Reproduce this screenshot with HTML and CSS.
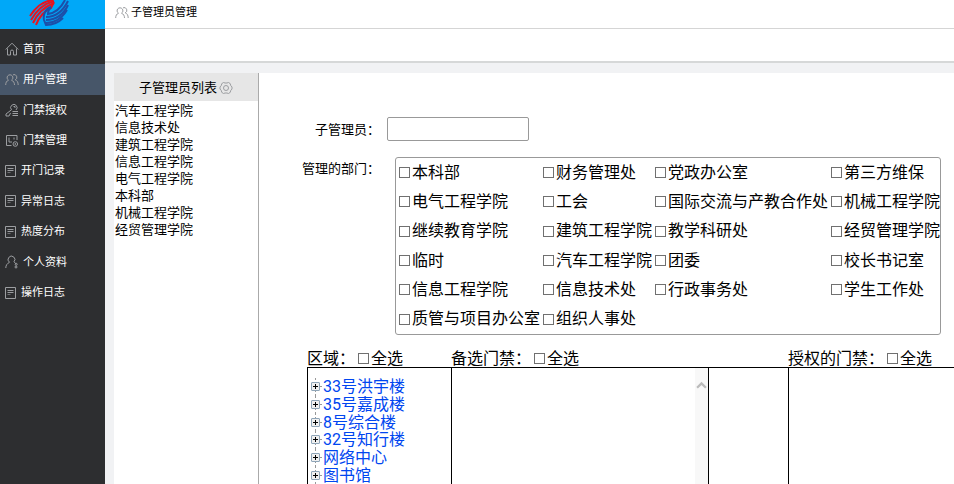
FILE: index.html
```html
<!DOCTYPE html>
<html lang="zh-CN">
<head>
    <meta charset="UTF-8">
    <meta name="viewport" content="width=device-width, initial-scale=1.0">
    <title>子管理员管理</title>
    <link rel="stylesheet" href="styles.css">
</head>
<body>
    <svg class="sprite" aria-hidden="true">
        <symbol id="icon-home" viewBox="0 0 14 14">
            <path d="M0.7 7.500 7 1.200l6.300 6.300M2.500 6.500v6.500h3V9.500a1.500 1.500 0 0 1 3 0V13h3V6.500"/>
        </symbol>
        <symbol id="icon-users" viewBox="0 0 14 14">
            <path d="M3.500 7.200a2.900 2.900 0 1 1 3 0C8.500 8 9.500 9.700 9.500 12M3.500 7.200C1.500 8 .7 9.700.7 12M8 1.800a2.600 2.600 0 0 1 2.200 5c2 .8 3 2.400 3 5.200"/>
        </symbol>
        <symbol id="icon-key" viewBox="0 0 14 14">
            <path d="M6.500 6.800a3.200 3.200 0 1 1 4.500.2M6.500 6.800 1 11v2h3l1.500-3M8.500 3.500h1.500v1.500M7.500 8.500H13M7.500 10.500H13M7.500 12.500H13"/>
        </symbol>
        <symbol id="icon-gate" viewBox="0 0 14 14">
            <path d="M6.500 11.500h-5v-10h10.500V6M4 3.500v4.500h3M9 3.500v2"/>
            <circle cx="10.300" cy="10" r="2.300"/>
            <circle cx="10.300" cy="10" r=".5"/>
        </symbol>
        <symbol id="icon-log" viewBox="0 0 12 14">
            <path d="M.5 1.500h10v11H.5zM2.500 4.500h6M2.500 6.500h6"/>
            <path d="M2.500 8.500h3" opacity=".6"/>
        </symbol>
        <symbol id="icon-person" viewBox="0 0 14 14">
            <path d="M4.500 7.300a3.400 3.400 0 1 1 4.500-.5M4.500 7.300C2 8.500.8 10.500.8 13M9 6.800l2 2"/>
            <circle cx="11.200" cy="9.300" r="1"/>
            <circle cx="11" cy="12" r="1"/>
        </symbol>
        <symbol id="icon-gear" viewBox="0 0 14 14">
            <path d="M4.500 1.500 6 2h2l1.500-.5 1.800 1.200.3 1.600L13 6v2l-1.400 1.700-.3 1.600-1.800 1.200L8 12H6l-1.500.5-1.800-1.200-.3-1.600L1 8V6l1.400-1.700.3-1.600z"/>
            <circle cx="7" cy="7" r="2.500"/>
        </symbol>
    </svg>

    <div class="app">
        <aside class="sidebar">
            <div class="logo">
                <svg viewBox="0 0 42 28" aria-hidden="true">
                    <g class="logo-red">
                        <path d="M2 16C7 8 15 1 25 0"/>
                        <path d="M3 20C8 11 15 4 26 1"/>
                        <path d="M5 23C9 14 16 7 26 3"/>
                        <path d="M8 25C11 17 17 10 23 8L26 2"/>
                    </g>
                    <g class="logo-blue">
                        <path d="M40 1C35 11 28 17 18 17"/>
                        <path d="M40 5C36 14 28 20 18 20"/>
                        <path d="M39 10C34 18 27 23 18 23"/>
                        <path d="M37 0C33 8 27 13 20 14C20 11 21 9 23 7C17 9 15 15 16 20L18 25C25 25 30 23 35 18"/>
                    </g>
                </svg>
            </div>
            <nav>
                <ul class="menu">
                    <li><a href="#"><svg class="icon"><use href="#icon-home"/></svg>首页</a></li>
                    <li><a href="#" class="active"><svg class="icon"><use href="#icon-users"/></svg>用户管理</a></li>
                    <li><a href="#"><svg class="icon"><use href="#icon-key"/></svg>门禁授权</a></li>
                    <li><a href="#"><svg class="icon"><use href="#icon-gate"/></svg>门禁管理</a></li>
                    <li><a href="#"><svg class="icon icon-narrow"><use href="#icon-log"/></svg>开门记录</a></li>
                    <li><a href="#"><svg class="icon icon-narrow"><use href="#icon-log"/></svg>异常日志</a></li>
                    <li><a href="#"><svg class="icon icon-narrow"><use href="#icon-log"/></svg>热度分布</a></li>
                    <li><a href="#"><svg class="icon"><use href="#icon-person"/></svg>个人资料</a></li>
                    <li><a href="#"><svg class="icon icon-narrow"><use href="#icon-log"/></svg>操作日志</a></li>
                </ul>
            </nav>
        </aside>

        <div class="main">
            <header class="page-title"><svg class="icon"><use href="#icon-users"/></svg><h1>子管理员管理</h1></header>
            <div class="toolbar"></div>

            <div class="content">
                <section class="admin-list">
                    <h2>子管理员列表<svg class="icon"><use href="#icon-gear"/></svg></h2>
                    <ul>
                        <li>汽车工程学院</li>
                        <li>信息技术处</li>
                        <li>建筑工程学院</li>
                        <li>信息工程学院</li>
                        <li>电气工程学院</li>
                        <li>本科部</li>
                        <li>机械工程学院</li>
                        <li>经贸管理学院</li>
                    </ul>
                </section>

                <form class="admin-form">
                    <div class="form-row">
                        <label class="form-label" for="admin_name">子管理员：</label>
                        <input type="text" id="admin_name" name="admin_name">
                    </div>
                    <div class="form-row dept-row">
                        <span class="form-label" id="dept_label">管理的部门：</span>
                        <div class="dept-box" role="group" aria-labelledby="dept_label">
                            <table>
                                <tr>
                                    <td><label><input type="checkbox">本科部</label></td>
                                    <td><label><input type="checkbox">财务管理处</label></td>
                                    <td><label><input type="checkbox">党政办公室</label></td>
                                    <td><label><input type="checkbox">第三方维保</label></td>
                                </tr>
                                <tr>
                                    <td><label><input type="checkbox">电气工程学院</label></td>
                                    <td><label><input type="checkbox">工会</label></td>
                                    <td><label><input type="checkbox">国际交流与产教合作处</label></td>
                                    <td><label><input type="checkbox">机械工程学院</label></td>
                                </tr>
                                <tr>
                                    <td><label><input type="checkbox">继续教育学院</label></td>
                                    <td><label><input type="checkbox">建筑工程学院</label></td>
                                    <td><label><input type="checkbox">教学科研处</label></td>
                                    <td><label><input type="checkbox">经贸管理学院</label></td>
                                </tr>
                                <tr>
                                    <td><label><input type="checkbox">临时</label></td>
                                    <td><label><input type="checkbox">汽车工程学院</label></td>
                                    <td><label><input type="checkbox">团委</label></td>
                                    <td><label><input type="checkbox">校长书记室</label></td>
                                </tr>
                                <tr>
                                    <td><label><input type="checkbox">信息工程学院</label></td>
                                    <td><label><input type="checkbox">信息技术处</label></td>
                                    <td><label><input type="checkbox">行政事务处</label></td>
                                    <td><label><input type="checkbox">学生工作处</label></td>
                                </tr>
                                <tr>
                                    <td><label><input type="checkbox">质管与项目办公室</label></td>
                                    <td><label><input type="checkbox">组织人事处</label></td>
                                    <td></td>
                                    <td></td>
                                </tr>
                            </table>
                        </div>
                    </div>

                    <div class="pickers">
                        <div class="picker area">
                            <div class="picker-head">区域：<label><input type="checkbox">全选</label></div>
                            <div class="picker-body">
                                <ul class="tree">
                                    <li><button type="button" aria-label="展开"></button><a href="#">33号洪宇楼</a></li>
                                    <li><button type="button" aria-label="展开"></button><a href="#">35号嘉成楼</a></li>
                                    <li><button type="button" aria-label="展开"></button><a href="#">8号综合楼</a></li>
                                    <li><button type="button" aria-label="展开"></button><a href="#">32号知行楼</a></li>
                                    <li><button type="button" aria-label="展开"></button><a href="#">网络中心</a></li>
                                    <li><button type="button" aria-label="展开"></button><a href="#">图书馆</a></li>
                                </ul>
                            </div>
                        </div>
                        <div class="picker candidates">
                            <div class="picker-head">备选门禁：<label><input type="checkbox">全选</label></div>
                            <div class="picker-body">
                                <div class="scrollbar">
                                    <svg viewBox="0 0 10 8" aria-hidden="true"><path d="M1 6.500l4-4 4 4"/></svg>
                                </div>
                            </div>
                        </div>
                        <div class="picker actions">
                            <div class="picker-body"></div>
                        </div>
                        <div class="picker granted">
                            <div class="picker-head">授权的门禁：<label><input type="checkbox">全选</label></div>
                            <div class="picker-body"></div>
                        </div>
                    </div>
                </form>
            </div>
        </div>
    </div>
</body>
</html>
```

FILE: styles.css
```css
* {
    box-sizing: border-box;
}

body {
    margin: 0;
    font-family: Roboto, "Noto Sans CJK SC", sans-serif;
    font-size: 13px;
    line-height: 17px;
    color: #000;
    background-color: #f1f2f4;
}

ul {
    list-style: none;
    margin: 0;
    padding: 0;
}

h1, h2 {
    margin: 0;
    font-weight: normal;
}

.sprite {
    display: none;
}

.icon {
    width: 14px;
    height: 14px;
    flex: none;
    fill: none;
    stroke: #9c9ea1;
    stroke-width: 1;
}

.icon-narrow {
    width: 12px;
}

.app {
    display: flex;
    height: 100vh;
    overflow: hidden;
}

/* sidebar */
.sidebar {
    flex: 0 0 105px;
    background-color: #2d2e30;
}

.logo {
    height: 29px;
    padding-left: 28px;
    background-color: #00a8f8;
}

.logo svg {
    display: block;
    width: 42px;
    height: 28px;
    fill: none;
    stroke-width: 2;
}

.logo-red {
    stroke: #e8141e;
}

.logo-blue {
    stroke: #1c4fa8;
}

.menu {
    display: grid;
    grid-auto-rows: 1fr;
    height: 274px;
    padding-top: 0;
    margin-top: 5px;
}

.menu a {
    display: flex;
    align-items: center;
    gap: 4px;
    height: 100%;
    padding-left: 5px;
    font-size: 11px;
    color: #fff;
    text-decoration: none;
}

.menu a.active {
    background-color: #475669;
}

/* top bars */
.main {
    flex: 1;
    min-width: 0;
    display: flex;
    flex-direction: column;
}

.page-title {
    display: flex;
    align-items: center;
    gap: 2px;
    flex: 0 0 29px;
    padding: 0 10px 3px;
    background-color: #fff;
    border-bottom: 1px solid #d5d5d5;
}

.page-title h1 {
    font-size: 11px;
}

.toolbar {
    flex: 0 0 34px;
    background-color: #fff;
    border-bottom: 2px solid #d6d8d8;
}

.content {
    flex: 1;
    display: flex;
    min-height: 0;
    margin: 10px 0 0 9px;
    background-color: #fff;
}

/* left list */
.admin-list {
    flex: 0 0 145px;
    border-right: 1px solid #aaa;
}

.admin-list h2 {
    display: flex;
    align-items: center;
    justify-content: center;
    gap: 2px;
    height: 28px;
    padding-top: 1px;
    font-size: 13px;
    background-color: #e6e6e6;
}

.admin-list ul {
    padding: 1px;
}

.admin-list li {
    line-height: 17px;
}

/* form */
.admin-form {
    flex: 1;
    min-width: 0;
    padding: 44px 0 0 43px;
}

.form-row {
    display: flex;
    align-items: center;
}

.form-label {
    width: 78px;
    text-align: right;
    white-space: nowrap;
}

input[type="text"] {
    width: 142px;
    height: 24px;
    margin-left: 7px;
    padding: 0 4px;
    border: 1px solid #999;
    border-radius: 2px;
    font: inherit;
}

input[type="checkbox"] {
    appearance: none;
    width: 11px;
    height: 11px;
    margin: 0 2px 0 3px;
    border: 1px solid #707070;
    background-color: #fff;
}

input[type="checkbox"]:checked {
    background-color: #0075ff;
}

.dept-row {
    align-items: flex-start;
    margin-top: 16px;
}

.dept-row .form-label {
    line-height: 24px;
}

.dept-box {
    margin-left: 15px;
    border: 1px solid #999;
    border-radius: 3px;
}

.dept-box table {
    height: 176px;
    border-collapse: collapse;
    font-size: 16px;
}

.dept-box td {
    padding: 0;
}

.dept-box label, .picker-head label {
    display: flex;
    align-items: center;
    line-height: 20px;
    white-space: nowrap;
}

/* pickers */
.pickers {
    display: flex;
    align-items: flex-end;
    height: 300px;
    margin: 15px 0 0 5px;
    font-size: 16px;
}

.picker {
    display: flex;
    flex-direction: column;
    justify-content: flex-end;
    height: 100%;
}

.picker-head {
    display: flex;
    align-items: center;
    height: 17px;
    white-space: nowrap;
}

.picker-body {
    height: 283px;
    border-top: 1px solid #000;
    border-left: 1px solid #000;
}

.area {
    flex: 0 0 144px;
}

.candidates {
    flex: 0 0 257px;
}

.candidates .picker-body {
    display: flex;
    justify-content: flex-end;
}

.actions {
    flex: 0 0 80px;
}

.granted {
    flex: 1;
}

.scrollbar {
    width: 13px;
    padding: 12px 1px;
    background-color: #f8f8f8;
}

.scrollbar svg {
    display: block;
    width: 11px;
    height: 10px;
    fill: none;
    stroke: #bbb;
    stroke-width: 2;
}

.tree {
    display: grid;
    grid-auto-rows: 1fr;
    height: 106px;
    margin: 10px 0 0 3px;
}

.tree li {
    display: flex;
    align-items: center;
    line-height: 17px;
    background: repeating-linear-gradient(#999 0 2px, transparent 2px 4px) 4px 0 / 1px 100% no-repeat;
}

.tree button {
    width: 9px;
    height: 9px;
    padding: 0;
    border: 1px solid #8fa5b8;
    border-radius: 1px;
    background:
        linear-gradient(#000, #000) center / 5px 1px no-repeat,
        linear-gradient(#000, #000) center / 1px 5px no-repeat,
        #f0f0f0;
}

.tree button::after {
    content: "";
    display: block;
    width: 2px;
    margin-left: 8px;
    border-top: 1px solid #999;
}

.tree a {
    margin-left: 3px;
    color: #0046f0;
    text-decoration: none;
}
```
